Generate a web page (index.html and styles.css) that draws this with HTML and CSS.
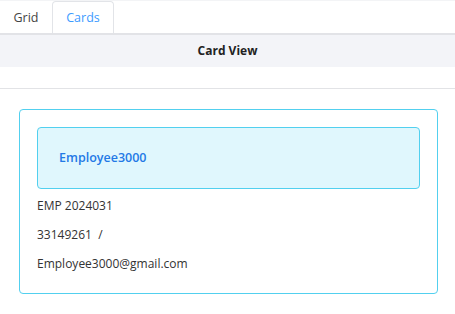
FILE: index.html
```html
<html>

<head>
    <title>Card View</title>
    <link rel="stylesheet" href="styles.css">
</head>

<body>
    <div class="tabs">
        <div class="tab">Grid</div>
        <div class="tab active">Cards</div>
    </div>
    <div class="view-header">Card View</div>
    <div class="spacer"></div>
    <div class="card-list">
        <div class="card">
            <div class="card-title">Employee3000</div>
            <div class="card-line">EMP 2024031</div>
            <div class="card-line">33149261 &nbsp;/</div>
            <div class="card-line">Employee3000@gmail.com</div>
        </div>
    </div>
</body>

</html>
```

FILE: styles.css
```css
body {
    margin: 0;
    font-family: 'Open Sans', sans-serif;
    color: #333;
    background: #fff;
}

.tabs {
    display: flex;
    height: 32px;
    border-top: 1px solid #f3f4f6;
}

.tab {
    width: 52px;
    text-align: center;
    line-height: 32px;
    font-size: 12.5px;
    color: #444;
    border: 1px solid transparent;
    border-bottom: none;
    border-radius: 4px 4px 0 0;
    box-sizing: border-box;
}

.tab.active {
    width: 62px;
    color: #3d9bff;
    border-color: #e2e4e8;
    line-height: 31px;
}

.view-header {
    height: 32px;
    line-height: 32px;
    border-top: 2px solid #e2e3e7;
    background-color: #f3f4f8;
    text-align: center;
    font-size: 12px;
    font-weight: bold;
    color: #222;
}

.spacer {
    height: 21px;
    border-bottom: 1px solid #e2e3e6;
}

.card-list {
    padding: 20px 17px 20px 19px;
}

.card {
    border: 1px solid #52d0ef;
    border-radius: 4px;
    padding: 17px 17px 15px 17px;
}

.card-title {
    height: 60px;
    line-height: 60px;
    padding-left: 21px;
    background-color: #e0f7fd;
    border: 1px solid #52d0ef;
    border-radius: 4px;
    color: #2379e6;
    font-size: 12.5px;
    font-weight: 600;
    margin-bottom: 2px;
}

.card-line {
    line-height: 29px;
    font-size: 12px;
    color: #333;
}
```
